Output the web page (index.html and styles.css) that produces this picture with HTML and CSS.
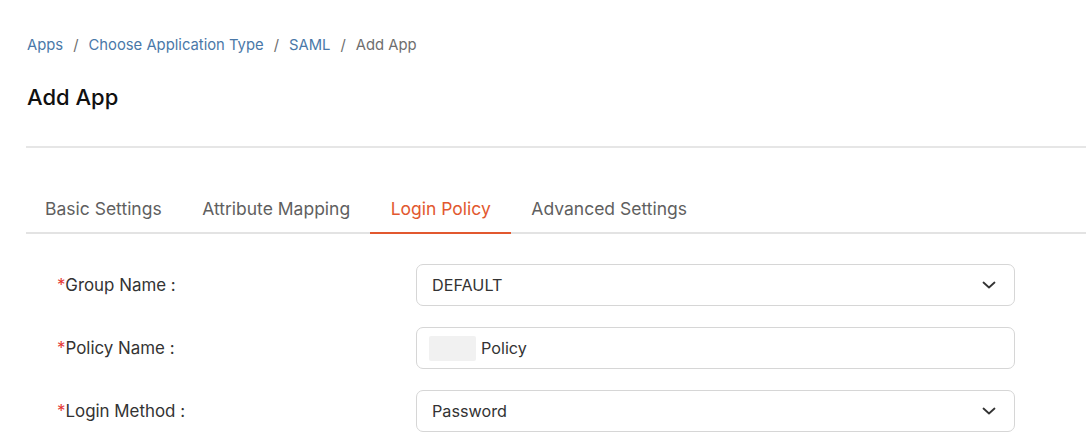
FILE: index.html
```html
<!DOCTYPE html>
<html lang="en">
<head>
<meta charset="utf-8">
<title>Add App</title>
<link rel="stylesheet" href="styles.css">
</head>
<body>
<div class="page">
  <nav class="breadcrumb">
    <a class="crumb-link">Apps</a><span class="sep">/</span><a class="crumb-link">Choose Application Type</a><span class="sep">/</span><a class="crumb-link">SAML</a><span class="sep">/</span><span class="crumb-current">Add App</span>
  </nav>
  <h1 class="title">Add App</h1>
  <div class="divider"></div>
  <div class="tabs">
    <div class="tab">Basic Settings</div>
    <div class="tab">Attribute Mapping</div>
    <div class="tab active">Login Policy</div>
    <div class="tab">Advanced Settings</div>
  </div>
  <div class="form">
    <div class="row">
      <label class="label"><span class="req">*</span>Group Name :</label>
      <div class="field select">
        <span class="value">DEFAULT</span>
        <svg class="chev" width="14" height="8" viewBox="0 0 14 8"><path d="M1.5 1.5 L7 6.5 L12.5 1.5" fill="none" stroke="#333" stroke-width="1.8" stroke-linecap="round" stroke-linejoin="round"/></svg>
      </div>
    </div>
    <div class="row">
      <label class="label"><span class="req">*</span>Policy Name :</label>
      <div class="field">
        <span class="blur"></span><span class="value">Policy</span>
      </div>
    </div>
    <div class="row">
      <label class="label"><span class="req">*</span>Login Method :</label>
      <div class="field select">
        <span class="value">Password</span>
        <svg class="chev" width="14" height="8" viewBox="0 0 14 8"><path d="M1.5 1.5 L7 6.5 L12.5 1.5" fill="none" stroke="#333" stroke-width="1.8" stroke-linecap="round" stroke-linejoin="round"/></svg>
      </div>
    </div>
  </div>
</div>
</body>
</html>
```

FILE: styles.css
```css
* { box-sizing: border-box; }
html, body { margin: 0; padding: 0; background: #fff; }
body {
  font-family: Inter, "Noto Sans", "Liberation Sans", sans-serif;
  color: #222;
  width: 1086px;
  height: 447px;
  overflow: hidden;
}
.page {
  padding: 35px 0 0 26px;
}
.breadcrumb {
  display: flex;
  align-items: center;
  height: 20px;
  font-size: 14.8px;
  line-height: 20px;
  padding-left: 1px;
}
.crumb-link { color: #4a78a8; }
.crumb-current { color: #6e6e6e; }
.sep { color: #6e6e6e; padding: 0 10px; }
.title {
  margin: 27px 0 0 1px;
  font-size: 22px;
  line-height: 30px;
  font-weight: 500;
  color: #111;
}
.divider {
  margin-top: 34px;
  height: 2px;
  background: #e6e6e6;
}
.tabs {
  display: flex;
  margin-top: 49px;
  border-bottom: 2px solid #e3e3e3;
}
.tab {
  padding: 0 20px 11px 20.5px;
  font-size: 17.5px;
  line-height: 24px;
  color: #5f5f5f;
  margin-bottom: -2px;
  border-bottom: 2px solid transparent;
}
.tab:first-child { padding-left: 19px; }
.tab.active {
  color: #e2582f;
  border-bottom-color: #e2582f;
}
.form {
  padding: 30px 0 0 31px;
  display: flex;
  flex-direction: column;
  gap: 21px;
}
.row {
  display: flex;
  align-items: center;
}
.label {
  width: 359px;
  font-size: 16.9px;
  color: #333;
}
.req { color: #e53935; }
.field {
  width: 599px;
  height: 42px;
  border: 1px solid #d6d6d6;
  border-radius: 7px;
  display: flex;
  align-items: center;
  padding: 0 15px 0 15px;
  font-size: 16.2px;
  color: #333;
}
.select { justify-content: space-between; padding-right: 18px; }
.blur {
  width: 47px;
  height: 25px;
  background: #f1f1f1;
  margin: 0 5px 0 -3px;
  border-radius: 2px;
}
.chev { display: block; }
```
